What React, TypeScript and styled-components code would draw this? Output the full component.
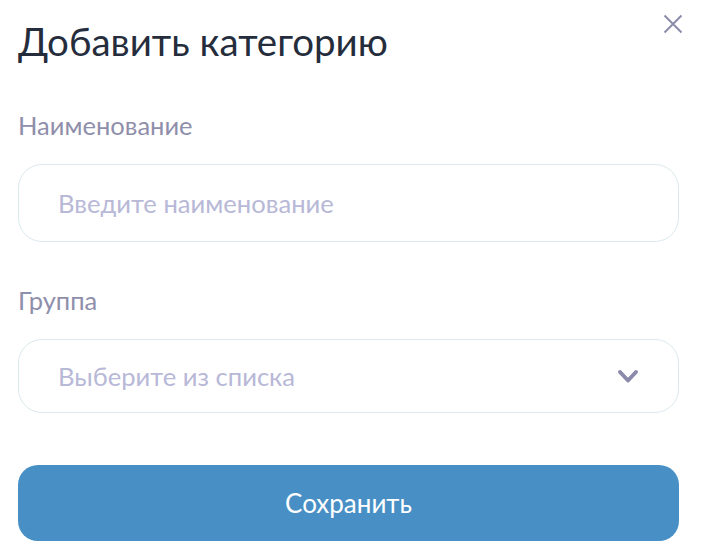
import React from "react";
import styled, { createGlobalStyle } from "styled-components";

const GlobalStyle = createGlobalStyle`
  html, body {
    margin: 0;
    padding: 0;
    background: #ffffff;
  }
  body {
    font-family: Lato, "Noto Sans", sans-serif;
  }
  * {
    box-sizing: border-box;
  }
`;

const App = () => {
  return (
    <>
      <GlobalStyle />
      <SModal>
        <SCloseButton aria-label="Закрыть">
          <svg width="20" height="20" viewBox="0 0 20 20">
            <path d="M1.5 1.5 L18.5 18.5 M18.5 1.5 L1.5 18.5" stroke="#8d8cab" strokeWidth="2" fill="none" />
          </svg>
        </SCloseButton>
        <STitle>Добавить категорию</STitle>

        <SField>
          <SLabel>Наименование</SLabel>
          <SInput placeholder="Введите наименование" />
        </SField>

        <SField $top={43}>
          <SLabel>Группа</SLabel>
          <SSelect>
            <SPlaceholder>Выберите из списка</SPlaceholder>
            <svg width="22" height="15" viewBox="0 0 22 15">
              <polyline
                points="3,3 11,11.5 19,3"
                stroke="#8c8aab"
                strokeWidth="4"
                fill="none"
                strokeLinecap="round"
                strokeLinejoin="round"
              />
            </svg>
          </SSelect>
        </SField>

        <SSaveButton>Сохранить</SSaveButton>
      </SModal>
    </>
  );
};

const SModal = styled.div`
  position: relative;
  display: flex;
  flex-direction: column;
  width: 702px;
  padding: 19px 23px 0 18px;
`;

const SCloseButton = styled.button`
  position: absolute;
  top: 14px;
  right: 19px;
  display: flex;
  padding: 0;
  border: none;
  background: none;
  cursor: pointer;
`;

const STitle = styled.h1`
  margin: 0;
  font-size: 38.5px;
  line-height: 44px;
  font-weight: 400;
  color: #252d3d;
`;

const SField = styled.div<{ $top?: number }>`
  display: flex;
  flex-direction: column;
  gap: 24px;
  margin-top: ${({ $top }) => $top ?? 47}px;
`;

const SLabel = styled.label`
  font-size: 25.5px;
  line-height: 30px;
  color: #8f8fab;
`;

const SInput = styled.input`
  width: 100%;
  height: 78px;
  padding: 0 24px 0 39px;
  border: 1px solid #dbe9ee;
  border-radius: 24px;
  font-family: Lato, "Noto Sans", sans-serif;
  font-size: 25.6px;
  color: #252d3d;
  outline: none;
  background: #ffffff;

  &::placeholder {
    color: #b8b8d7;
  }
`;

const SSelect = styled.div`
  display: flex;
  align-items: center;
  justify-content: space-between;
  height: 74px;
  padding: 0 39px 0 39px;
  border: 1px solid #dbe9ee;
  border-radius: 24px;
  cursor: pointer;
`;

const SPlaceholder = styled.span`
  font-size: 25.6px;
  color: #b8b8d7;
`;

const SSaveButton = styled.button`
  margin-top: 52px;
  height: 76px;
  border: none;
  border-radius: 20px;
  background-color: #478fc5;
  color: #ffffff;
  font-family: Lato, "Noto Sans", sans-serif;
  font-size: 26px;
  cursor: pointer;
`;

export default App;
